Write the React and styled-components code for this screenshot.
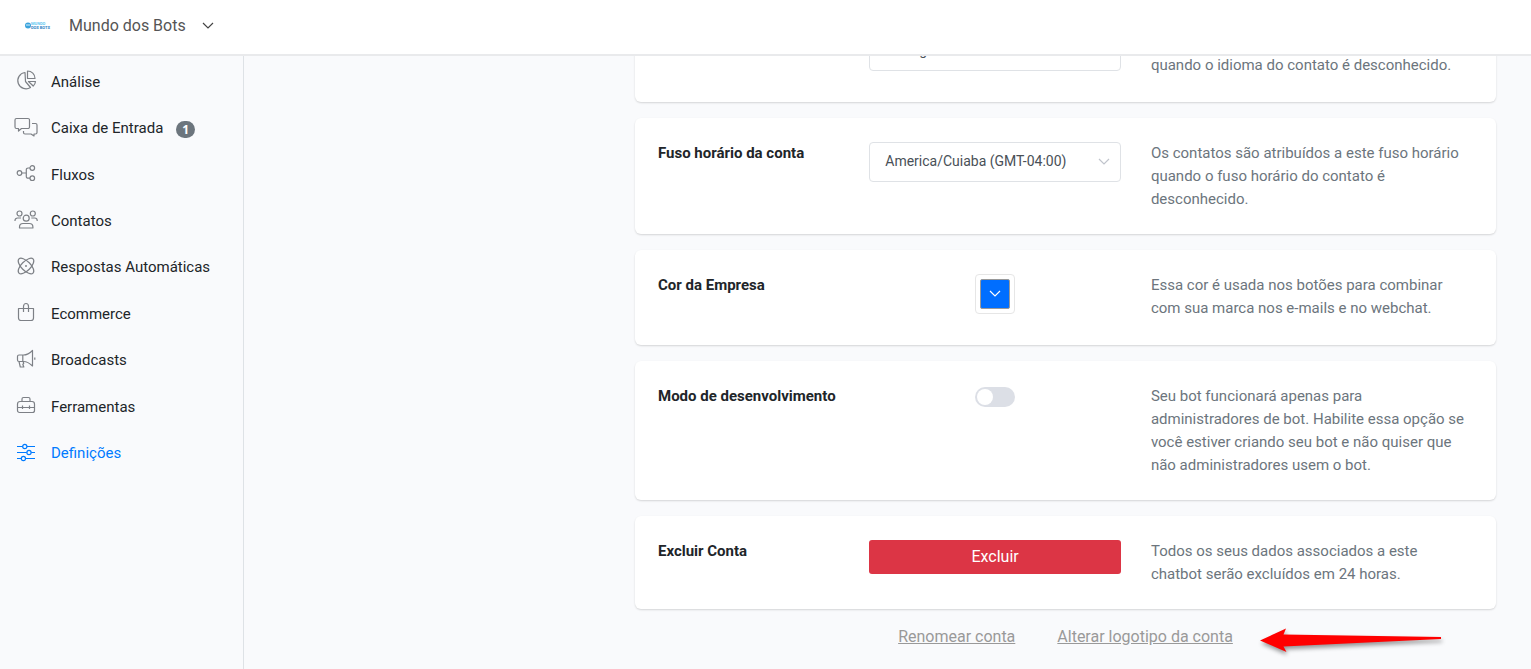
import React, { useState } from "react";
import styled, { createGlobalStyle } from "styled-components";

const GlobalStyle = createGlobalStyle`
  * {
    box-sizing: border-box;
  }
  body {
    margin: 0;
    background: #f9fafc;
    color: #212529;
    font-family: Roboto, "Liberation Sans", sans-serif;
    font-size: 15px;
    line-height: 23px;
  }
`;

const menu = [
  { icon: "pie", label: "Análise" },
  { icon: "chat", label: "Caixa de Entrada", count: 1 },
  { icon: "flow", label: "Fluxos" },
  { icon: "users", label: "Contatos" },
  { icon: "atom", label: "Respostas Automáticas" },
  { icon: "bag", label: "Ecommerce" },
  { icon: "horn", label: "Broadcasts" },
  { icon: "toolbox", label: "Ferramentas" },
  { icon: "sliders", label: "Definições", active: true },
];

const icons = {
  pie: (
    <>
      <path d="M11 4.500a8.200 8.200 0 1 0 5.500 15L11.500 13.500z" />
      <path d="M13.500 3v7.500H21A7.500 7.500 0 0 0 13.500 3z" />
      <path d="M14.500 13.500h7a7 7 0 0 1-2.300 4.500z" />
    </>
  ),
  chat: (
    <>
      <path d="M2.500 3.500h11.500a1.500 1.500 0 0 1 1.500 1.500v7a1.500 1.500 0 0 1-1.500 1.500H7.500L4.500 16v-2.500h-2A1.500 1.500 0 0 1 1 12V5a1.500 1.500 0 0 1 1.500-1.500z" />
      <path d="M18 8.500h3.500A1.500 1.500 0 0 1 23 10v7.500a1.500 1.500 0 0 1-1.500 1.500H20v2l-3-2h-6a1.500 1.500 0 0 1-1.500-1.500V16" />
    </>
  ),
  flow: (
    <>
      <circle cx="5.500" cy="12" r="2.300" />
      <circle cx="18.300" cy="7" r="2.300" />
      <circle cx="18.300" cy="17.200" r="2.300" />
      <path d="M7.800 12h4.500M16 7h-2a1.700 1.700 0 0 0-1.700 1.700v6.800a1.700 1.700 0 0 0 1.700 1.700h2" />
    </>
  ),
  users: (
    <>
      <circle cx="5.500" cy="5.500" r="2.500" />
      <circle cx="18.800" cy="5.500" r="2.500" />
      <circle cx="12.200" cy="10.200" r="3" />
      <path d="M1 13v-.5A2.500 2.500 0 0 1 3.500 10H7M23.200 13v-.5a2.500 2.500 0 0 0-2.500-2.500h-3.400" />
      <path d="M5.500 20v-1A3.500 3.500 0 0 1 9 15.500h6.400a3.500 3.500 0 0 1 3.500 3.500v1z" />
    </>
  ),
  atom: (
    <>
      <ellipse cx="12" cy="12" rx="10" ry="4.600" transform="rotate(45 12 12)" />
      <ellipse cx="12" cy="12" rx="10" ry="4.600" transform="rotate(-45 12 12)" />
      <circle cx="12" cy="12" r=".4" />
    </>
  ),
  bag: (
    <>
      <path d="M4.500 8.500h15V18a2.500 2.500 0 0 1-2.500 2.500H7A2.500 2.500 0 0 1 4.500 18z" />
      <path d="M9.500 12V6.500a2.500 3 0 0 1 5 0V12" />
    </>
  ),
  horn: (
    <>
      <path d="M18.500 3.500V19c-2.500-2.500-5.500-4.500-9-4.500H5A1.500 1.500 0 0 1 3.500 13V9.500A1.500 1.500 0 0 1 5 8h4.500c3.500 0 6.500-2 9-4.500zM8.800 8v6.500M20.800 10.500v2.300" />
      <path d="M5 14.500l1.300 5.500h3.500l-1-2.800.9-.6-.5-2.100" />
    </>
  ),
  toolbox: (
    <>
      <path d="M6 8.500h12a2.500 2.500 0 0 1 2.500 2.500v6.500a2 2 0 0 1-2 2h-13a2 2 0 0 1-2-2V11A2.500 2.500 0 0 1 6 8.500z" />
      <path d="M8 8.500V6a1.500 1.500 0 0 1 1.500-1.500h5A1.500 1.500 0 0 1 16 6v2.500M3.500 14.500h17M8.500 12.500V16M15.500 12.500V16" />
    </>
  ),
  sliders: (
    <>
      <path d="M3 6.500h5.500M13 6.500h8M3 12.500h9.800M17.200 12.500H21M3 18.500h4.200M11.600 18.500H21" />
      <circle cx="10.800" cy="6.500" r="2.100" />
      <circle cx="15" cy="12.500" r="2.100" />
      <circle cx="9.400" cy="18.500" r="2.100" />
    </>
  ),
};

const Chevron = ({ color, width = 1.2 }) => (
  <svg width="12" height="12" viewBox="0 0 12 12" fill="none" stroke={color} strokeWidth={width} aria-hidden="true">
    <path d="M1 4l5 5 5-5" />
  </svg>
);

const Logo = () => (
  <svg width="28" height="10" viewBox="0 0 28 10" aria-hidden="true">
    <circle cx="4" cy="5.500" r="3" fill="#3ba3dc" />
    <path d="M2 5h4" stroke="#d5effb" />
    <text x="7" y="5" fontSize="4" fontWeight="700" fill="#62c6ef" fontFamily="Roboto">MUNDO</text>
    <text x="7" y="9" fontSize="4" fontWeight="700" fill="#2f83c4" fontFamily="Roboto">DOS BOTS</text>
  </svg>
);

const App = () => {
  const [devMode, setDevMode] = useState(false);

  return (
    <Page>
      <GlobalStyle />
      <Header>
        <Logo />
        <AccountButton type="button">
          Mundo dos Bots
          <Chevron color="#444" />
        </AccountButton>
      </Header>
      <Body>
        <Sidebar>
          {menu.map((item) => (
            <MenuLink href="#" key={item.label} $active={item.active}>
              <MenuIcon viewBox="0 0 24 24">{icons[item.icon]}</MenuIcon>
              {item.label}
              {item.count && <Badge>{item.count}</Badge>}
            </MenuLink>
          ))}
        </Sidebar>
        <Main>
          <Settings>
            <Card>
              <Label htmlFor="language">Idioma da conta</Label>
              <Control>
                <SelectBox>
                  <Select id="language">
                    <option>Portuguese</option>
                  </Select>
                  <Chevron color="#c0c4cc" />
                </SelectBox>
              </Control>
              <Description>
                Os contatos são atribuídos a este idioma quando o idioma do contato é desconhecido.
              </Description>
            </Card>
            <Card>
              <Label htmlFor="timezone">Fuso horário da conta</Label>
              <Control>
                <SelectBox>
                  <Select id="timezone">
                    <option>America/Cuiaba (GMT-04:00)</option>
                  </Select>
                  <Chevron color="#c0c4cc" />
                </SelectBox>
              </Control>
              <Description>
                Os contatos são atribuídos a este fuso horário quando o fuso horário do contato é
                desconhecido.
              </Description>
            </Card>
            <Card>
              <Label htmlFor="color">Cor da Empresa</Label>
              <Control>
                <ColorButton id="color" type="button">
                  <Swatch>
                    <Chevron color="#fff" />
                  </Swatch>
                </ColorButton>
              </Control>
              <Description>
                Essa cor é usada nos botões para combinar com sua marca nos e-mails e no webchat.
              </Description>
            </Card>
            <Card>
              <Label htmlFor="devmode">Modo de desenvolvimento</Label>
              <Control>
                <Switch
                  id="devmode"
                  type="checkbox"
                  checked={devMode}
                  onChange={(e) => setDevMode(e.target.checked)}
                />
              </Control>
              <Description>
                Seu bot funcionará apenas para administradores de bot. Habilite essa opção se você
                estiver criando seu bot e não quiser que não administradores usem o bot.
              </Description>
            </Card>
            <Card>
              <Label htmlFor="delete">Excluir Conta</Label>
              <Control>
                <DeleteButton id="delete" type="button">Excluir</DeleteButton>
              </Control>
              <Description>
                Todos os seus dados associados a este chatbot serão excluídos em 24 horas.
              </Description>
            </Card>
            <Links>
              <FooterLink href="#">Renomear conta</FooterLink>
              <LinkWrap>
                <FooterLink href="#">Alterar logotipo da conta</FooterLink>
                <Arrow viewBox="0 0 190 36">
                  <path d="M2 15.500L28 3.500l-2.500 6L183 12v2L25.500 21.500l3 5.500z" fill="#f00" />
                </Arrow>
              </LinkWrap>
            </Links>
          </Settings>
        </Main>
      </Body>
    </Page>
  );
};

export default App;

const Page = styled.div`
  display: flex;
  flex-direction: column;
  height: 100vh;
  overflow: hidden;
`;

const Header = styled.header`
  display: flex;
  flex: none;
  align-items: center;
  gap: 17px;
  height: 56px;
  padding: 0 24px 4px;
  background: #fff;
  border-bottom: 2px solid #e9eaec;
`;

const AccountButton = styled.button`
  display: flex;
  align-items: center;
  gap: 16px;
  padding: 0;
  border: 0;
  background: none;
  color: #555;
  font-family: inherit;
  font-size: 16px;
`;

const Body = styled.div`
  display: flex;
  flex: 1;
  min-height: 0;
`;

const Sidebar = styled.nav`
  display: grid;
  flex: none;
  grid-template-rows: repeat(9, 1fr);
  align-content: start;
  width: 244px;
  padding: 3px 0 192px;
  border-right: 1px solid #dee2e6;
`;

const MenuLink = styled.a`
  display: flex;
  align-items: center;
  padding-left: 14px;
  color: ${(props) => (props.$active ? "#007bff" : "#212529")};
  text-decoration: none;

  svg {
    stroke: ${(props) => (props.$active ? "#007bff" : "#7d8086")};
  }
`;

const MenuIcon = styled.svg`
  width: 24px;
  height: 24px;
  margin: 0 13px 4px 0;
  fill: none;
  stroke-width: 1.2;
  stroke-linejoin: round;
`;

const Badge = styled.span`
  margin: 2px 0 0 13px;
  padding: 0 6px;
  border-radius: 10px;
  background: #6c757d;
  color: #fff;
  font-family: "Open Sans", "Liberation Sans", sans-serif;
  font-size: 12px;
  font-weight: 700;
  line-height: 17px;
`;

const Main = styled.main`
  display: flex;
  flex: 1;
  flex-direction: column;
  justify-content: flex-end;
  min-width: 0;
  padding: 0 35px 21px 391px;
  overflow: hidden;
`;

const Settings = styled.div`
  display: flex;
  flex: none;
  flex-direction: column;
  gap: 16px;
`;

const Card = styled.section`
  display: grid;
  grid-template-columns: minmax(0, 3fr) minmax(0, 4fr) minmax(0, 5fr);
  align-items: start;
  padding: 24px 8px 23px;
  border-radius: 6px;
  background: #fff;
  box-shadow: 0 1px 2px rgba(0, 0, 0, 0.15);
`;

const Label = styled.label`
  padding: 0 15px;
  font-weight: 700;
`;

const Control = styled.div`
  display: flex;
  justify-content: center;
  padding: 0 15px 8px;
`;

const Description = styled.p`
  margin: 0;
  padding: 0 18px 0 15px;
  color: #6c757d;
`;

const SelectBox = styled.div`
  position: relative;
  width: 100%;

  svg {
    position: absolute;
    top: 13px;
    right: 11px;
    pointer-events: none;
  }
`;

const Select = styled.select`
  display: block;
  width: 100%;
  height: 40px;
  padding: 0 30px 2px 15px;
  border: 1px solid #dfe2e6;
  border-radius: 4px;
  appearance: none;
  background: #fff;
  color: #495057;
  font-family: inherit;
  font-size: 14px;
`;

const ColorButton = styled.button`
  width: 40px;
  height: 40px;
  padding: 4px;
  border: 1px solid #e6e6e6;
  border-radius: 4px;
  background: #fff;
`;

const Swatch = styled.span`
  display: flex;
  align-items: center;
  justify-content: center;
  height: 30px;
  padding-bottom: 2px;
  border: 1px solid #999;
  border-radius: 2px;
  background: #006eff;
`;

const Switch = styled.input`
  width: 40px;
  height: 20px;
  margin: 2px 0 0;
  padding: 2px;
  border-radius: 10px;
  appearance: none;
  background: ${(props) => (props.checked ? "#007bff" : "#dcdfe6")};

  &::before {
    content: "";
    display: block;
    width: 16px;
    height: 16px;
    margin-left: ${(props) => (props.checked ? "20px" : "0")};
    border-radius: 50%;
    background: #fff;
  }
`;

const DeleteButton = styled.button`
  width: 100%;
  height: 34px;
  padding: 0 6px 2px;
  border: 0;
  border-radius: 3px;
  background: #dc3545;
  color: #fff;
  font-family: inherit;
  font-size: 16px;
`;

const Links = styled.div`
  display: flex;
  justify-content: center;
  gap: 42px;
  font-size: 16px;
`;

const FooterLink = styled.a`
  color: #999;
`;

const LinkWrap = styled.span`
  position: relative;
`;

const Arrow = styled.svg`
  position: absolute;
  top: 0;
  left: 100%;
  width: 190px;
  height: 36px;
  margin-left: 25px;
  filter: drop-shadow(1px 3px 2px rgba(0, 0, 0, 0.4));
`;
